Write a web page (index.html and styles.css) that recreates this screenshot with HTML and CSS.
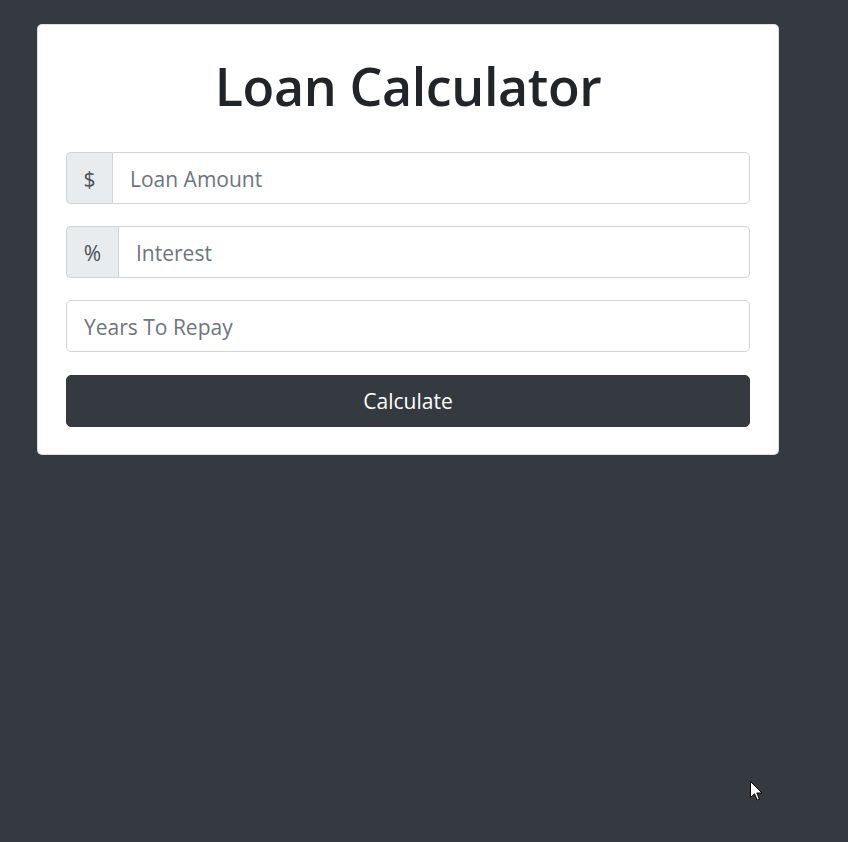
FILE: index.html
```html
<!DOCTYPE html>
<html lang="en">
<head>
<meta charset="utf-8">
<title>Loan Calculator</title>
<link rel="stylesheet" href="styles.css">
</head>
<body>
<div class="page">
  <div class="card">
    <h1 class="title">Loan Calculator</h1>
    <form class="form">
      <div class="input-group">
        <span class="addon addon-dollar">$</span>
        <input class="control" type="text" placeholder="Loan Amount">
      </div>
      <div class="input-group">
        <span class="addon addon-pct">%</span>
        <input class="control" type="text" placeholder="Interest">
      </div>
      <div class="input-group">
        <input class="control control-solo" type="text" placeholder="Years To Repay">
      </div>
      <button class="btn" type="button">Calculate</button>
    </form>
  </div>
</div>
<svg class="cursor" width="13" height="20" viewBox="0 0 13 20" aria-hidden="true">
  <path d="M0.5 0.5 L0.5 16.5 L4.5 12.8 L7.2 19 L9.4 18 L6.8 12 L12 12 Z" fill="#fff" stroke="#000" stroke-width="1" stroke-linejoin="miter"/>
</svg>
</body>
</html>
```

FILE: styles.css
```css
html, body {
  margin: 0;
  padding: 0;
  background: #343a40;
  height: 100%;
}

body {
  font-family: "Open Sans", "Noto Sans", "Liberation Sans", sans-serif;
  color: #212529;
  position: relative;
  overflow: hidden;
}

.page {
  padding: 24px 0 0 37px;
}

.card {
  box-sizing: border-box;
  width: 742px;
  background: #fff;
  border: 1px solid rgba(0, 0, 0, 0.125);
  border-radius: 5px;
  padding: 27px 28px 27px 28px;
}

.title {
  margin: 0 0 33px 0;
  font-size: 52px;
  line-height: 67px;
  font-weight: 600;
  text-align: center;
  color: #212529;
  letter-spacing: -0.4px;
}

.form {
  display: flex;
  flex-direction: column;
  gap: 22px;
  margin: 0;
}

.input-group {
  display: flex;
  height: 52px;
}

.addon {
  box-sizing: border-box;
  display: flex;
  align-items: center;
  justify-content: center;
  padding-top: 1px;
  background: #e9ecef;
  border: 1px solid #ced4da;
  border-right: none;
  border-radius: 5px 0 0 5px;
  color: #495057;
  font-size: 21px;
  height: 52px;
}

.addon-dollar {
  width: 46px;
}

.addon-pct {
  width: 52px;
}

.control {
  box-sizing: border-box;
  flex: 1;
  min-width: 0;
  height: 52px;
  margin: 0;
  padding: 2px 17px 0 17px;
  border: 1px solid #ced4da;
  border-radius: 0 5px 5px 0;
  background: #fff;
  font-family: inherit;
  font-size: 21px;
  color: #495057;
  outline: none;
}

.control-solo {
  border-radius: 5px;
}

.control::placeholder {
  color: #6c757d;
  opacity: 1;
}

.btn {
  box-sizing: border-box;
  margin-top: 1px;
  height: 52px;
  width: 100%;
  border: 1px solid #343a40;
  border-radius: 5px;
  background: #343a40;
  color: #fff;
  font-family: inherit;
  font-size: 21px;
  cursor: pointer;
}

.cursor {
  position: absolute;
  left: 750px;
  top: 781px;
}
```
